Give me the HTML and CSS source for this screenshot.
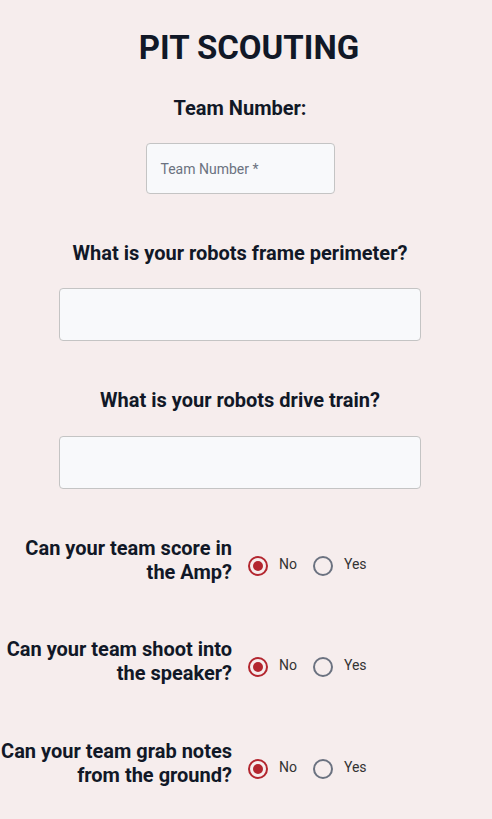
FILE: index.html
```html
<!DOCTYPE html>
<html>
<head>
<meta charset="utf-8">
<link rel="stylesheet" href="styles.css">
</head>
<body>
<div class="page">
  <h1 class="title">PIT SCOUTING</h1>
  <form class="form">
    <div class="field">
      <div class="q">Team Number:</div>
      <div class="input small"><span class="ph">Team Number *</span></div>
    </div>
    <div class="field">
      <div class="q">What is your robots frame perimeter?</div>
      <div class="input wide"></div>
    </div>
    <div class="field">
      <div class="q">What is your robots drive train?</div>
      <div class="input wide"></div>
    </div>

    <div class="row r1">
      <div class="rq">Can your team score in the Amp?</div>
      <div class="radios">
        <span class="radio on"></span><span class="rl">No</span>
        <span class="radio"></span><span class="rl">Yes</span>
      </div>
    </div>
    <div class="row r2">
      <div class="rq">Can your team shoot into the speaker?</div>
      <div class="radios">
        <span class="radio on"></span><span class="rl">No</span>
        <span class="radio"></span><span class="rl">Yes</span>
      </div>
    </div>
    <div class="row r3">
      <div class="rq">Can your team grab notes from the ground?</div>
      <div class="radios">
        <span class="radio on"></span><span class="rl">No</span>
        <span class="radio"></span><span class="rl">Yes</span>
      </div>
    </div>
  </form>
</div>
</body>
</html>
```
FILE: styles.css
```css
html, body {
  margin: 0;
  padding: 0;
  background: #f6eded;
  font-family: Roboto, "Liberation Sans", sans-serif;
  color: #111827;
}
.page {
  width: 492px;
  height: 819px;
  overflow: hidden;
}
.title {
  margin: 0;
  padding: 28px 0 0 6px;
  font-size: 33px;
  line-height: 40px;
  font-weight: 700;
  text-align: center;
}
.form {
  width: 480px;
  display: flex;
  flex-direction: column;
}
.field {
  display: flex;
  flex-direction: column;
  align-items: center;
}
.field:first-child { margin-top: 28px; }
.field + .field { margin-top: 47px; }
.q {
  font-size: 20px;
  line-height: 24px;
  font-weight: 700;
}
.input {
  box-sizing: border-box;
  background: #f8f9fb;
  border: 1px solid #c4c4c4;
  border-radius: 4px;
  display: flex;
  align-items: center;
}
.small {
  margin-top: 23px;
  width: 189px;
  height: 51px;
  padding-left: 14px;
}
.wide {
  margin-top: 23px;
  width: 362px;
  height: 53px;
}
.field:nth-child(3) .wide { margin-top: 24px; }
.ph {
  font-size: 14px;
  color: #6b7280;
}
.row {
  display: flex;
  align-items: center;
}
.r1 { margin-top: 48px; }
.r2 { margin-top: 54px; }
.r3 { margin-top: 55px; }
.rq {
  width: 232px;
  text-align: right;
  font-size: 20px;
  line-height: 23.5px;
  font-weight: 700;
}
.radios {
  display: flex;
  align-items: center;
  margin-left: 16px;
  margin-top: 10px;
}
.radio {
  box-sizing: border-box;
  width: 20px;
  height: 20px;
  border-radius: 50%;
  border: 2px solid #6b7280;
  display: flex;
  align-items: center;
  justify-content: center;
}
.radio.on {
  border-color: #b3262f;
}
.radio.on::after {
  content: "";
  width: 10px;
  height: 10px;
  border-radius: 50%;
  background: #b3262f;
}
.rl {
  font-size: 14px;
  color: #333;
  margin-left: 11px;
  margin-right: 16px;
  line-height: 16px;
  margin-top: -3px;
}
```
